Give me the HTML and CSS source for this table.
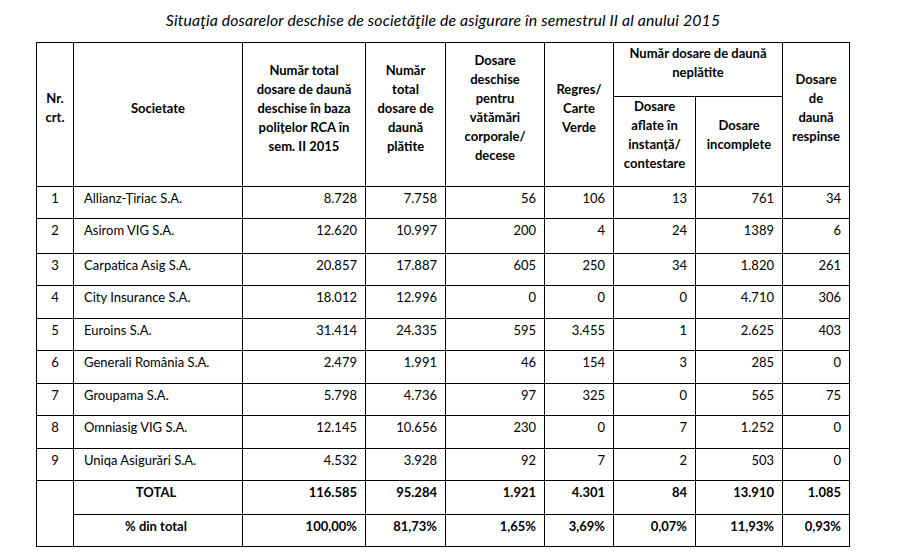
FILE: index.html
```html
<!DOCTYPE html>
<html lang="ro">
<head>
<meta charset="utf-8">
<title>Situaţia dosarelor</title>
<link rel="stylesheet" href="styles.css">
</head>
<body>
<div class="page">
  <p class="title">Situaţia dosarelor deschise de societăţile de asigurare în semestrul II al anului 2015</p>
  <table class="grid">
    <colgroup>
      <col class="c1"><col class="c2"><col class="c3"><col class="c4"><col class="c5"><col class="c6"><col class="c7"><col class="c8"><col class="c9">
    </colgroup>
    <thead>
      <tr class="h1">
        <th rowspan="2">Nr.<br>crt.</th>
        <th rowspan="2">Societate</th>
        <th rowspan="2">Număr total<br>dosare de daună<br>deschise în baza<br>polițelor RCA în<br>sem. II 2015</th>
        <th rowspan="2">Număr<br>total<br>dosare de<br>daună<br>plătite</th>
        <th rowspan="2">Dosare<br>deschise<br>pentru<br>vătămări<br>corporale/<br>decese</th>
        <th rowspan="2">Regres/<br>Carte<br>Verde</th>
        <th colspan="2" class="grp">Număr dosare de daună<br>neplătite</th>
        <th rowspan="2">Dosare<br>de<br>daună<br>respinse</th>
      </tr>
      <tr class="h2">
        <th>Dosare<br>aflate în<br>instanță/<br>contestare</th>
        <th>Dosare<br>incomplete</th>
      </tr>
    </thead>
    <tbody>
      <tr class="r32"><td class="nr">1</td><td class="name">Allianz-Țiriac S.A.</td><td>8.728</td><td>7.758</td><td>56</td><td>106</td><td>13</td><td>761</td><td>34</td></tr>
      <tr class="r35"><td class="nr">2</td><td class="name">Asirom VIG S.A.</td><td>12.620</td><td>10.997</td><td>200</td><td>4</td><td>24</td><td>1389</td><td>6</td></tr>
      <tr class="r32"><td class="nr">3</td><td class="name">Carpatica Asig S.A.</td><td>20.857</td><td>17.887</td><td>605</td><td>250</td><td>34</td><td>1.820</td><td>261</td></tr>
      <tr class="r33"><td class="nr">4</td><td class="name">City Insurance S.A.</td><td>18.012</td><td>12.996</td><td>0</td><td>0</td><td>0</td><td>4.710</td><td>306</td></tr>
      <tr class="r32"><td class="nr">5</td><td class="name">Euroins S.A.</td><td>31.414</td><td>24.335</td><td>595</td><td>3.455</td><td>1</td><td>2.625</td><td>403</td></tr>
      <tr class="r33"><td class="nr">6</td><td class="name">Generali România S.A.</td><td>2.479</td><td>1.991</td><td>46</td><td>154</td><td>3</td><td>285</td><td>0</td></tr>
      <tr class="r32"><td class="nr">7</td><td class="name">Groupama S.A.</td><td>5.798</td><td>4.736</td><td>97</td><td>325</td><td>0</td><td>565</td><td>75</td></tr>
      <tr class="r33"><td class="nr">8</td><td class="name">Omniasig VIG S.A.</td><td>12.145</td><td>10.656</td><td>230</td><td>0</td><td>7</td><td>1.252</td><td>0</td></tr>
      <tr class="r32"><td class="nr">9</td><td class="name">Uniqa Asigurări S.A.</td><td>4.532</td><td>3.928</td><td>92</td><td>7</td><td>2</td><td>503</td><td>0</td></tr>
      <tr class="sum r34"><td class="nr" rowspan="2"></td><td class="label">TOTAL</td><td>116.585</td><td>95.284</td><td>1.921</td><td>4.301</td><td>84</td><td>13.910</td><td>1.085</td></tr>
      <tr class="sum r32"><td class="label">% din total</td><td>100,00%</td><td>81,73%</td><td>1,65%</td><td>3,69%</td><td>0,07%</td><td>11,93%</td><td>0,93%</td></tr>
    </tbody>
  </table>
</div>
</body>
</html>
```

FILE: styles.css
```css
html, body {
  margin: 0;
  padding: 0;
  background: #fff;
}
body {
  font-family: Lato, "Open Sans", "Liberation Sans", sans-serif;
  color: #000;
}
.page {
  width: 897px;
  padding: 11px 0 0 36px;
  box-sizing: border-box;
}
.title {
  margin: 0 0 13px 0;
  width: 814px;
  text-align: center;
  font-style: italic;
  font-size: 15.8px;
  line-height: 18px;
  letter-spacing: 0.15px;
}
.grid {
  border-collapse: collapse;
  table-layout: fixed;
  width: 814px;
  font-size: 13px;
}
.c1 { width: 37px; }
.c2 { width: 169px; }
.c3 { width: 123px; }
.c4 { width: 80px; }
.c5 { width: 99px; }
.c6 { width: 69px; }
.c7 { width: 82px; }
.c8 { width: 87px; }
.c9 { width: 67px; }
.grid th,
.grid td {
  border: 1px solid #000;
}
.grid th {
  font-weight: bold;
  text-align: center;
  vertical-align: middle;
  line-height: 19px;
  padding: 0 0 13px 0;
  white-space: nowrap;
}
.h1 { height: 54px; }
.h2 { height: 90px; }
.grid td {
  text-align: right;
  vertical-align: top;
  line-height: 18px;
  padding: 2px 8px 10px 4px;
  white-space: nowrap;
}
.grid tbody tr.r32 { height: 32px; }
.grid tbody tr.r33 { height: 33px; }
.grid tbody tr.r34 { height: 34px; }
.grid tbody tr.r35 { height: 35px; }
.grid td.nr {
  text-align: center;
  padding-left: 0;
  padding-right: 0;
}
.grid td.name {
  text-align: left;
  padding-left: 10px;
}
.grid td.label {
  text-align: center;
}
.sum td {
  font-weight: bold;
}
```
